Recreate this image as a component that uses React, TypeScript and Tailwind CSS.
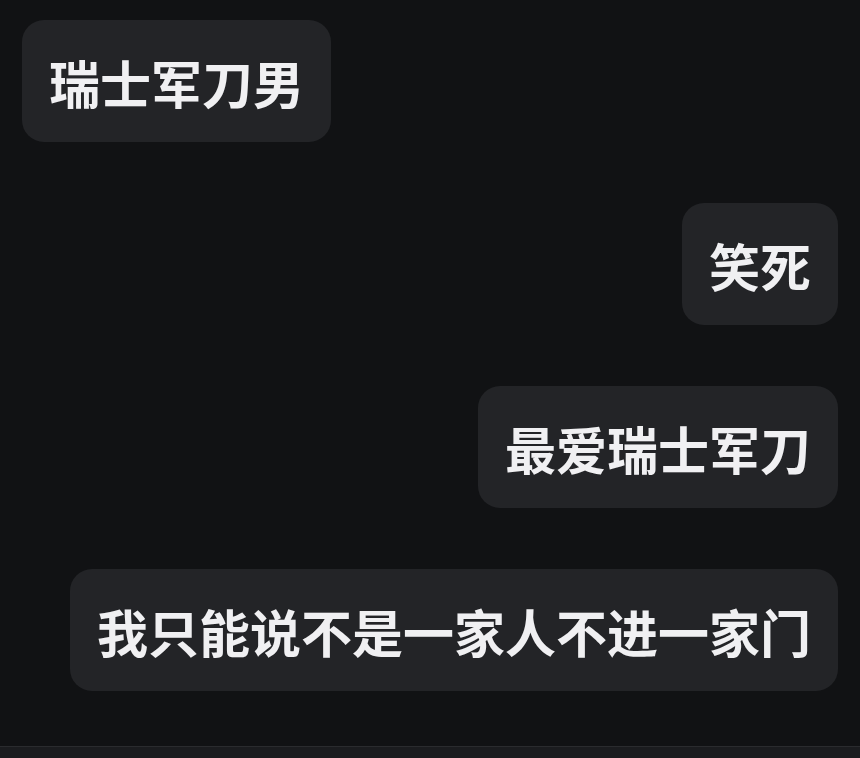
const messages = [
  { text: '瑞士军刀男', mine: false },
  { text: '笑死', mine: true },
  { text: '最爱瑞士军刀', mine: true },
  { text: '我只能说不是一家人不进一家门', mine: true },
];

function Bubble({ text, mine }: { text: string; mine: boolean }) {
  return (
    <div className={mine ? 'flex justify-end' : 'flex justify-start'}>
      <div className="bg-[#232427] rounded-[22px] h-[122px] px-[27px] pt-[3px] flex items-center text-[51px] leading-none font-bold text-[#f0f0f2] whitespace-nowrap">
        {text}
      </div>
    </div>
  );
}

export default function App() {
  return (
    <div
      className="w-[860px] h-[758px] bg-[#111214] flex flex-col overflow-hidden"
      style={{ fontFamily: '"Noto Sans CJK SC", "Noto Sans", sans-serif' }}
    >
      {/* Messages */}
      <div className="flex-1 flex flex-col gap-[61px] pt-[20px] pl-[22px] pr-[22px]">
        {messages.map((m, i) => (
          <Bubble key={i} text={m.text} mine={m.mine} />
        ))}
      </div>

      {/* Input bar edge */}
      <div className="h-[12px] bg-[#1b1c1f] border-t border-[#2a2b2e]" />
    </div>
  );
}
